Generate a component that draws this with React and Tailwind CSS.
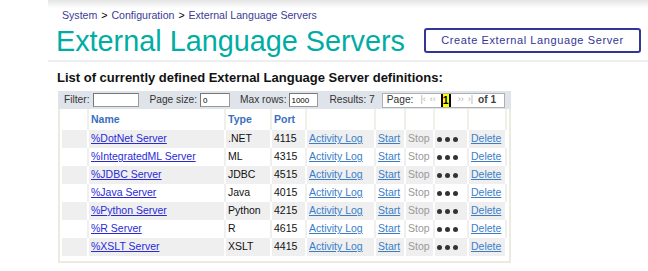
import React from "react";

const rows = [
  ["%DotNet Server", ".NET", "4115"],
  ["%IntegratedML Server", "ML", "4315"],
  ["%JDBC Server", "JDBC", "4515"],
  ["%Java Server", "Java", "4015"],
  ["%Python Server", "Python", "4215"],
  ["%R Server", "R", "4615"],
  ["%XSLT Server", "XSLT", "4415"],
];

const grid =
  "grid grid-cols-[27px_137px_46px_35px_69px_30px_29px_34px_38px]";

function Dots() {
  return (
    <div className="flex items-center gap-[3px]">
      <span className="w-[5px] h-[5px] rounded-full bg-[#333]" />
      <span className="w-[5px] h-[5px] rounded-full bg-[#333]" />
      <span className="w-[5px] h-[5px] rounded-full bg-[#333]" />
    </div>
  );
}

export default function App() {
  return (
    <div className="w-[648px] h-[271px] bg-white font-['Liberation_Sans',Arial,sans-serif] overflow-hidden">
      <div className="ml-[48px] h-[8px] bg-gradient-to-b from-[#e4e4e4] to-white" />
      <div className="pl-[62px] h-[14px] leading-[14px] text-[10.6px] text-[#3b3b96] whitespace-nowrap">
        System <span className="text-black mx-[1px]">&gt;</span> Configuration{" "}
        <span className="text-black mx-[1px]">&gt;</span> External Language Servers
      </div>
      <div className="flex items-start justify-between h-[38px] pl-[56px] pr-[7px]">
        <div className="mt-[2px] text-[28.8px] leading-[34px] text-[#00ada4] whitespace-nowrap">
          External Language Servers
        </div>
        <div className="mt-[6px] w-[217px] h-[25px] border-2 border-[#333695] rounded-[3px] flex items-center justify-center text-[11px] tracking-[0.6px] text-[#333695] whitespace-nowrap">
          Create External Language Server
        </div>
      </div>
      <div className="ml-[48px] h-[2px] bg-[#efefef]" />
      <div className="mt-[8px] pl-[57px] h-[16px] leading-[16px] text-[13px] font-bold text-[#111] whitespace-nowrap">
        List of currently defined External Language Server definitions:
      </div>
      <div className="ml-[58px] mt-[5px] w-[453px]">
        <div className="h-[18px] bg-[#dfe3ea] flex items-center text-[10.2px] text-[#333] whitespace-nowrap pl-[6px]">
          <span>Filter:</span>
          <input
            readOnly
            defaultValue=""
            className="ml-[4px] w-[46px] h-[14px] bg-white border border-[#9a9a9a] border-t-[#777] border-l-[#777] outline-none"
          />
          <span className="ml-[10px]">Page size:</span>
          <input
            readOnly
            defaultValue="0"
            className="ml-[3px] w-[30px] h-[14px] bg-white border border-[#9a9a9a] border-t-[#777] border-l-[#777] text-[8px] pl-[2px] text-black outline-none"
          />
          <span className="ml-[10px]">Max rows:</span>
          <input
            readOnly
            defaultValue="1000"
            className="ml-[3px] w-[29px] h-[14px] bg-white border border-[#9a9a9a] border-t-[#777] border-l-[#777] text-[8px] pl-[1px] text-black outline-none"
          />
          <span className="ml-[11px]">Results: 7</span>
          <div className="ml-[7px] w-[123px] h-[15px] bg-white border border-[#b0b0b0] flex items-center pl-[4px]">
            <span className="text-[#333]">Page:</span>
            <span className="ml-[7px] text-[9px] text-[#b0b0b0]">|‹</span>
            <span className="ml-[4px] text-[9px] text-[#b0b0b0]">‹‹</span>
            <span className="ml-[5px] w-[10px] h-[13px] bg-[#ffff00] border-x-2 border-black flex items-center justify-center text-[10.5px] font-bold text-black leading-none">
              1
            </span>
            <span className="ml-[7px] text-[9px] text-[#b0b0b0]">››</span>
            <span className="ml-[4px] text-[9px] text-[#b0b0b0]">›|</span>
            <span className="ml-[5px] font-bold text-[#444]">of 1</span>
          </div>
        </div>
        <div className="border-x-2 border-b-2 border-[#ebebdf] px-[2px] pb-[5px]">
          <div className={`${grid} h-[21px] bg-white text-[10.5px] font-bold text-[#3a6fbf]`}>
            {["", "Name", "Type", "Port", "", "", "", "", ""].map((h, i) => (
              <div
                key={i}
                className="border-r-2 border-[#f0f0ea] pl-[2px] flex items-center"
              >
                {h}
              </div>
            ))}
          </div>
          {rows.map((r, i) => {
            const odd = i % 2 === 0;
            const cell = `border-r-2 ${odd ? "border-white" : "border-[#efefef]"} pl-[2px] flex items-center`;
            return (
              <div
                key={i}
                className={`${grid} h-[18px] ${odd ? "bg-[#efefef]" : "bg-white"} text-[10.5px] text-[#111] whitespace-nowrap`}
              >
                <div className={cell} />
                <div className={cell}>
                  <span className="text-[#2a2ad8] underline underline-offset-1">{r[0]}</span>
                </div>
                <div className={cell}>{r[1]}</div>
                <div className={cell}>{r[2]}</div>
                <div className={cell}>
                  <span className="text-[#3b7ec8] underline underline-offset-1">Activity Log</span>
                </div>
                <div className={cell}>
                  <span className="text-[#3b7ec8] underline underline-offset-1">Start</span>
                </div>
                <div className={`${cell} text-[#999]`}>Stop</div>
                <div className={cell}>
                  <Dots />
                </div>
                <div className={`${cell} border-r-0`}>
                  <span className="text-[#3b7ec8] underline underline-offset-1">Delete</span>
                </div>
              </div>
            );
          })}
        </div>
      </div>
    </div>
  );
}
